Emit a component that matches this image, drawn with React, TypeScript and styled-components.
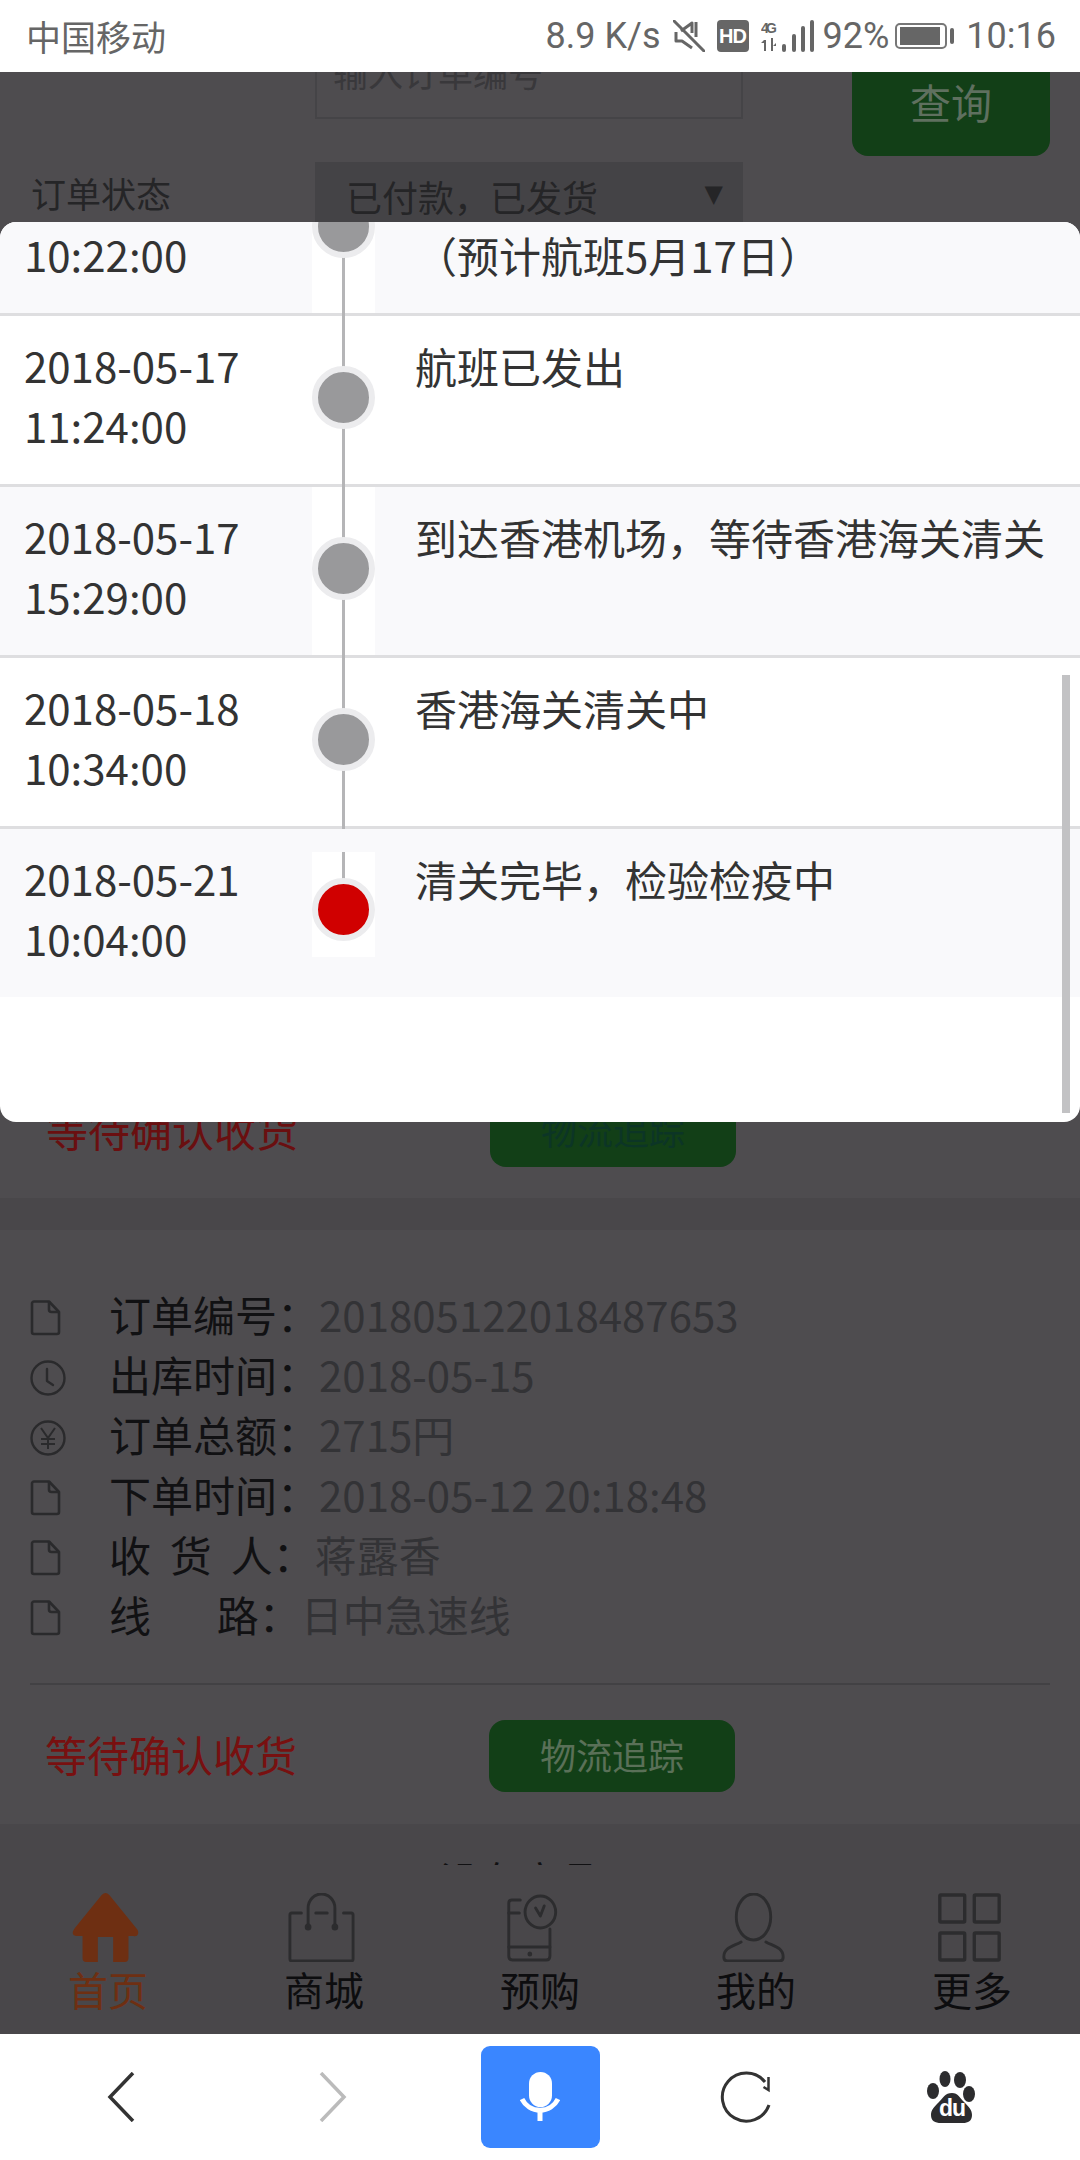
import React from 'react';
import styled, { createGlobalStyle } from 'styled-components';

const GlobalStyle = createGlobalStyle`
  html, body {
    margin: 0;
    padding: 0;
    background: #fff;
  }
  * {
    box-sizing: border-box;
  }
`;

const cjk = `"Noto Sans CJK SC", "Noto Sans", sans-serif`;

const Screen = styled.div`
  width: 1080px;
  height: 2160px;
  display: flex;
  flex-direction: column;
  overflow: hidden;
  font-family: ${cjk};
  background: #fff;
`;

/* status bar */
const StatusBar = styled.div`
  flex: none;
  height: 72px;
  padding: 0 24px 0 26px;
  display: flex;
  align-items: center;
  justify-content: space-between;
  color: #666;
  background: #fff;
`;

const Carrier = styled.span`
  font-size: 35px;
  line-height: 72px;
`;

const StatusRight = styled.div`
  display: flex;
  align-items: center;
  gap: 12px;
`;

const StatusText = styled.span`
  font-family: Roboto, sans-serif;
  font-size: 36px;
  line-height: 72px;
`;

const PercentText = styled(StatusText)`
  margin: 0 -6px 0 -3px;
`;

const HdBadge = styled.span`
  width: 32px;
  height: 32px;
  border-radius: 4px;
  background: #666;
  color: #fff;
  font-family: "Liberation Sans", sans-serif;
  font-weight: 700;
  font-size: 20px;
  line-height: 32px;
  text-align: center;
  letter-spacing: -1px;
`;

const Battery = styled.div`
  position: relative;
  width: 52px;
  height: 26px;
  margin-right: 7px;
  padding: 2px 5px 2px 3px;
  border: 2px solid #777;
  border-radius: 5px;
  &::after {
    content: '';
    position: absolute;
    right: -9px;
    top: 3px;
    width: 4px;
    height: 16px;
    border-radius: 2px;
    background: #666;
  }
`;

const BatteryFill = styled.div`
  height: 100%;
  background: #666;
`;

/* page behind the dialog, already dimmed */
const Page = styled.div`
  position: relative;
  flex: 1;
  min-height: 0;
  overflow: hidden;
  background: #4e4c4f;
`;

const Scrolled = styled.div`
  margin-top: -40px;
`;

const SearchForm = styled.div`
  display: flex;
  flex-direction: column;
  gap: 6px;
  padding: 0 30px 0 31px;
`;

const FormRow = styled.div`
  display: flex;
  align-items: flex-start;
`;

const FormLabel = styled.span`
  width: 284px;
  font-size: 35px;
  line-height: 62px;
  color: #252527;
`;

const FormInput = styled.div`
  width: 428px;
  height: 87px;
  padding-left: 16px;
  border: 2px solid #454447;
  border-top: none;
  font-size: 35px;
  line-height: 79px;
  color: #39383b;
`;

const SearchButton = styled.div`
  margin-left: auto;
  width: 198px;
  height: 124px;
  padding-top: 32px;
  border-radius: 0 0 16px 16px;
  background: #123f17;
  color: #5f705f;
  font-size: 41px;
  line-height: 74px;
  text-align: center;
`;

const FormSelect = styled.div`
  position: relative;
  width: 428px;
  height: 70px;
  padding-left: 31px;
  background: #444346;
  color: #252527;
  font-size: 36px;
  line-height: 68px;
`;

const SelectArrow = styled.span`
  position: absolute;
  right: 20px;
  top: 0;
  font-family: "DejaVu Sans", sans-serif;
  font-size: 24px;
  line-height: 64px;
`;

const FirstCard = styled.div`
  height: 966px;
  padding-top: 863px;
`;

const Gap = styled.div`
  height: 32px;
  background: #49474a;
`;

const OrderCard = styled.div`
  padding: 53px 30px 32px;
  background: #4e4c4f;
`;

const InfoList = styled.div`
  display: flex;
  flex-direction: column;
`;

const InfoRow = styled.div`
  height: 60px;
  display: flex;
  align-items: center;
  font-size: 42px;
  white-space: pre;
`;

const InfoIcon = styled.span`
  width: 79px;
  flex: none;
  display: flex;
  align-items: center;
  padding-top: 10px;
`;

const InfoLabel = styled.span`
  color: #111113;
`;

const InfoValue = styled.span`
  color: #333336;
`;

const Divider = styled.div`
  height: 2px;
  margin: 40px 0 35px;
  background: #424144;
`;

const OrderActions = styled.div<{ $inset: number }>`
  display: flex;
  align-items: center;
  padding-left: ${({ $inset }) => $inset}px;
`;

const OrderState = styled.span<{ $dim?: boolean }>`
  width: 444px;
  margin-bottom: 4px;
  font-size: 42px;
  line-height: 68px;
  color: ${({ $dim }) => ($dim ? '#6a0f10' : '#781010')};
`;

const TrackButton = styled.div<{ $dim?: boolean }>`
  width: 246px;
  height: 72px;
  border-radius: 16px;
  background: #123f17;
  color: ${({ $dim }) => ($dim ? '#0c3526' : '#5a7058')};
  font-size: 36px;
  line-height: 68px;
  text-align: center;
`;

const EndNote = styled.div`
  padding-top: 25px;
  height: 240px;
  background: #49474a;
  color: #111113;
  font-size: 40px;
  line-height: 60px;
  text-align: center;
`;

/* bottom nav of the page */
const TabBar = styled.div`
  position: absolute;
  left: 0;
  right: 0;
  bottom: 0;
  height: 169px;
  padding-top: 28px;
  display: grid;
  grid-template-columns: repeat(5, 216px);
  background: #49474a;
`;

const Tab = styled.div<{ $active?: boolean }>`
  display: flex;
  flex-direction: column;
  align-items: center;
  color: ${({ $active }) => ($active ? '#6e2f12' : '#0d0d0f')};
  font-size: 40px;
  line-height: 60px;
`;

const TabGlyph = styled.svg`
  display: block;
  width: 67px;
  height: 69px;
  margin: 0 0 -3px -6px;
`;

/* dialog */
const Dialog = styled.div`
  position: absolute;
  left: 0;
  right: 0;
  top: 150px;
  height: 900px;
  border-radius: 16px;
  overflow: hidden;
  background: #fff;
`;

const TrackList = styled.div`
  margin-top: -77px;
`;

const TrackRow = styled.div<{ $tinted?: boolean; $last?: boolean }>`
  height: ${({ $last }) => ($last ? '168px' : '171px')};
  display: flex;
  background: ${({ $tinted }) => ($tinted ? '#f9f9fb' : '#fff')};
  border-bottom: ${({ $last }) => ($last ? 'none' : '3px solid #dedee0')};
`;

const TrackTime = styled.div`
  width: 312px;
  flex: none;
  padding: 19px 0 0 24px;
  color: #333;
  font-size: 42px;
  line-height: 60px;
`;

const TrackRail = styled.div<{ $last?: boolean }>`
  position: relative;
  width: 63px;
  flex: none;
  display: flex;
  justify-content: center;
  background: #fff;
  margin-top: ${({ $last }) => ($last ? '23px' : '0')};
  height: ${({ $last }) => ($last ? '105px' : 'auto')};
  padding-top: ${({ $last }) => ($last ? '26px' : '50px')};
  &::before {
    content: '';
    position: absolute;
    left: 30px;
    top: 0;
    bottom: ${({ $last }) => ($last ? '60px' : '-3px')};
    width: 3px;
    background: #b5b5b7;
  }
`;

const TrackDot = styled.span<{ $current?: boolean }>`
  position: relative;
  width: 63px;
  height: 63px;
  border-radius: 50%;
  border: 6px solid #ececee;
  background: ${({ $current }) => ($current ? '#d00000' : '#99999b')};
`;

const TrackText = styled.div`
  padding: 20px 0 0 40px;
  color: #333;
  font-size: 42px;
  line-height: 60px;
  white-space: nowrap;
`;

const ScrollThumb = styled.div`
  position: absolute;
  right: 10px;
  top: 453px;
  width: 8px;
  height: 438px;
  background: #c2c2c4;
`;

/* browser toolbar */
const BrowserBar = styled.div`
  flex: none;
  height: 126px;
  padding-left: 15px;
  display: grid;
  grid-template-columns: 212px 212px 202px 210px 202px;
  align-items: center;
  background: #fff;
`;

const BrowserCell = styled.div`
  display: flex;
  justify-content: center;
`;

const MicButton = styled.div`
  width: 119px;
  height: 102px;
  display: flex;
  align-items: center;
  justify-content: center;
  border-radius: 9px;
  background: #3a86ff;
`;

const DocIcon = () => (
  <svg width="32" height="36" viewBox="0 0 32 36" fill="none" stroke="#2a2a2c" strokeWidth="2.6" strokeLinejoin="round">
    <path d="M2 3.5a2 2 0 0 1 2-2h15l10 10.5v20a2 2 0 0 1-2 2H4a2 2 0 0 1-2-2z" />
    <path d="M19 1.5v8a2.5 2.5 0 0 0 2.5 2.5H29" />
  </svg>
);

const ClockIcon = () => (
  <svg width="36" height="36" viewBox="0 0 36 36" fill="none" stroke="#2a2a2c" strokeWidth="2.4" strokeLinecap="round" strokeLinejoin="round">
    <circle cx="18" cy="18" r="16.5" />
    <path d="M17 9v12l6 4" />
  </svg>
);

const YenIcon = () => (
  <svg width="36" height="36" viewBox="0 0 36 36" fill="none" stroke="#2a2a2c" strokeWidth="2.4">
    <circle cx="18" cy="18" r="16.5" />
    <path strokeWidth="2" d="M11 8l7 10 7-10M18 18v11M11 19h14M11 24h14" />
  </svg>
);

const infoRows = [
  { icon: <DocIcon />, label: '订单编号：', value: '201805122018487653' },
  { icon: <ClockIcon />, label: '出库时间：', value: '2018-05-15' },
  { icon: <YenIcon />, label: '订单总额：', value: '2715円' },
  { icon: <DocIcon />, label: '下单时间：', value: '2018-05-12 20:18:48' },
  { icon: <DocIcon />, label: '收\u00a0\u00a0货\u00a0\u00a0人：', value: '蒋露香' },
  { icon: <DocIcon />, label: '线\u00a0\u00a0\u00a0\u00a0\u00a0\u00a0\u00a0路：', value: '日中急速线' },
];

// the first row is scrolled halfway out of the dialog, only its second line shows
const trackRows = [
  { date: '', time: '10:22:00', text: '（预计航班5月17日）', blankFirst: true },
  { date: '2018-05-17', time: '11:24:00', text: '航班已发出' },
  { date: '2018-05-17', time: '15:29:00', text: '到达香港机场，等待香港海关清关' },
  { date: '2018-05-18', time: '10:34:00', text: '香港海关清关中' },
  { date: '2018-05-21', time: '10:04:00', text: '清关完毕，检验检疫中' },
];

const ink = '#2c2c2e';

const tabs = [
  {
    label: '首页',
    active: true,
    glyph: (
      <path
        fill="#6e2f12"
        d="M35 0q2 0 4 2l28 33q3 3 2 6t-5 2h-5v22q0 4-4 4H43V44H27v25H15q-4 0-4-4V43H6q-4 0-5-2t2-6L31 2q2-2 4-2z"
      />
    ),
  },
  {
    label: '商城',
    glyph: (
      <g fill="none" stroke={ink} strokeWidth="3" strokeLinecap="round" strokeLinejoin="round">
        <path d="M14 20H4q-2 0-2 2v44q0 2 2 2h62q2 0 2-2V22q0-2-2-2H58" />
        <path d="M21 33V15a14 14 0 0 1 28 0v18" />
        <path d="M29 20h12" />
        <circle cx="21" cy="34" r="2" fill={ink} />
        <circle cx="49" cy="34" r="2" fill={ink} />
      </g>
    ),
  },
  {
    label: '预购',
    glyph: (
      <g fill="none" stroke={ink} strokeWidth="3" strokeLinecap="round" strokeLinejoin="round">
        <path d="M17 7H8q-3 0-3 3v53q0 4 4 4h35q4 0 4-4V36" />
        <path d="M5 20h11M5 54h43" />
        <circle cx="38" cy="19" r="16" />
        <path d="M33 15l5 8 4-10" />
        <circle cx="27" cy="61" r="1" fill={ink} />
      </g>
    ),
  },
  {
    label: '我的',
    glyph: (
      <g fill="none" stroke={ink} strokeWidth="3" strokeLinecap="round" strokeLinejoin="round">
        <ellipse cx="35" cy="24" rx="18" ry="23" />
        <path d="M22 49C15 53 4 54 4 64q0 4 4 4h54q4 0 4-4c0-10-11-11-18-15" />
      </g>
    ),
  },
  {
    label: '更多',
    glyph: (
      <g fill="none" stroke={ink} strokeWidth="3.5">
        <rect x="4" y="2" width="26" height="27" rx="1" />
        <rect x="40" y="2" width="26" height="27" rx="1" />
        <rect x="4" y="40" width="26" height="27" rx="1" />
        <rect x="40" y="40" width="26" height="27" rx="1" />
      </g>
    ),
  },
];

export default function App() {
  return (
    <Screen>
      <GlobalStyle />
      <StatusBar>
        <Carrier>中国移动</Carrier>
        <StatusRight>
          <StatusText>8.9 K/s</StatusText>
          <svg width="32" height="32" viewBox="0 0 32 32" fill="none" stroke="#666" strokeWidth="3" strokeLinejoin="round">
            <path d="M1 1l30 30" strokeLinecap="round" />
            <path d="M3 12v9h6l10 7" />
            <path d="M8 11l11-8v10" />
            <path d="M23 2v15" />
          </svg>
          <HdBadge>HD</HdBadge>
          <svg width="53" height="32" viewBox="0 0 53 32" fill="#666">
            <text x="0" y="13" fontFamily="Liberation Sans, sans-serif" fontWeight="700" fontSize="14" textLength="16">4G</text>
            <path d="M3 20h2v11H3zM10 18h2v13h-2zM0 23l3-3v3zM12 26l3-3v3z" />
            <rect x="21" y="24" width="4" height="8" rx="2" />
            <rect x="31" y="14" width="4" height="18" rx="2" />
            <rect x="40" y="6" width="4" height="26" rx="2" />
            <rect x="49" y="0" width="4" height="32" rx="2" />
          </svg>
          <PercentText>92%</PercentText>
          <Battery>
            <BatteryFill />
          </Battery>
          <StatusText>10:16</StatusText>
        </StatusRight>
      </StatusBar>

      <Page>
        <Scrolled>
          <SearchForm>
            <FormRow>
              <FormLabel />
              <FormInput>输入订单编号</FormInput>
              <SearchButton>查询</SearchButton>
            </FormRow>
            <FormRow>
              <FormLabel>订单状态</FormLabel>
              <FormSelect>
                已付款，已发货
                <SelectArrow>▼</SelectArrow>
              </FormSelect>
            </FormRow>
          </SearchForm>

          <FirstCard>
            <OrderActions $inset={46}>
              <OrderState $dim>等待确认收货</OrderState>
              <TrackButton $dim>物流追踪</TrackButton>
            </OrderActions>
          </FirstCard>
          <Gap />

          <OrderCard>
            <InfoList>
              {infoRows.map((row) => (
                <InfoRow key={row.label}>
                  <InfoIcon>{row.icon}</InfoIcon>
                  <InfoLabel>{row.label}</InfoLabel>
                  <InfoValue>{row.value}</InfoValue>
                </InfoRow>
              ))}
            </InfoList>
            <Divider />
            <OrderActions $inset={15}>
              <OrderState>等待确认收货</OrderState>
              <TrackButton>物流追踪</TrackButton>
            </OrderActions>
          </OrderCard>

          <EndNote>没有商品了</EndNote>
        </Scrolled>

        <TabBar>
          {tabs.map((tab) => (
            <Tab key={tab.label} $active={tab.active}>
              <TabGlyph viewBox="0 0 70 69" preserveAspectRatio="none">
                {tab.glyph}
              </TabGlyph>
              {tab.label}
            </Tab>
          ))}
        </TabBar>

        <Dialog>
          <TrackList>
            {trackRows.map((row, i) => {
              const last = i === trackRows.length - 1;
              return (
                <TrackRow key={row.time} $tinted={i % 2 === 0} $last={last}>
                  <TrackTime>
                    {row.date}
                    <br />
                    {row.time}
                  </TrackTime>
                  <TrackRail $last={last}>
                    <TrackDot $current={last} />
                  </TrackRail>
                  <TrackText>
                    {row.blankFirst && <br />}
                    {row.text}
                  </TrackText>
                </TrackRow>
              );
            })}
          </TrackList>
          <ScrollThumb />
        </Dialog>
      </Page>

      <BrowserBar>
        <BrowserCell>
          <svg width="28" height="50" viewBox="0 0 28 50" fill="none" stroke="#333" strokeWidth="3.5">
            <path d="M26 1L3 25l23 24" />
          </svg>
        </BrowserCell>
        <BrowserCell>
          <svg width="28" height="50" viewBox="0 0 28 50" fill="none" stroke="#bbb" strokeWidth="3.5">
            <path d="M2 1l23 24L2 49" />
          </svg>
        </BrowserCell>
        <BrowserCell>
          <MicButton>
            <svg width="40" height="50" viewBox="0 0 40 50" fill="#fff">
              <rect x="9" y="0" width="23" height="35" rx="11.5" />
              <path d="M2 27a20 20 0 0 0 36 0" fill="none" stroke="#fff" strokeWidth="5" />
              <rect x="17.5" y="40" width="5" height="9" />
            </svg>
          </MicButton>
        </BrowserCell>
        <BrowserCell>
          <svg width="52" height="52" viewBox="0 0 52 52" fill="none" stroke="#333" strokeWidth="3">
            <path d="M49 34A24 24 0 1 1 45 11" />
            <path d="M48.5 6v13l-5-3" strokeWidth="2.5" />
          </svg>
        </BrowserCell>
        <BrowserCell>
          <svg width="50" height="52" viewBox="0 0 50 52" fill="#2c2c2e">
            <ellipse cx="18" cy="8" rx="5.5" ry="8" />
            <ellipse cx="33" cy="9" rx="6" ry="8" />
            <ellipse cx="6" cy="20" rx="6" ry="8" />
            <ellipse cx="42" cy="23" rx="6" ry="8" />
            <path d="M25 22c6 0 8 5 12 9 5 5 8 8 8 13 0 6-4 8-9 8H14c-6 0-10-2-10-8 0-5 3-8 8-13 4-4 6-9 13-9z" />
            <text x="25" y="45" textAnchor="middle" fontFamily="Liberation Sans, sans-serif" fontWeight="700" fontSize="23" fill="#fff" letterSpacing="-1">du</text>
          </svg>
        </BrowserCell>
      </BrowserBar>
    </Screen>
  );
}
